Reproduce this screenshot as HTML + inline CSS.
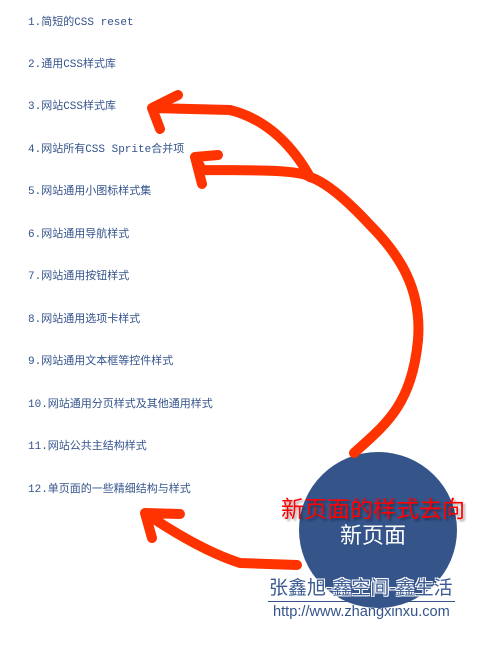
<!DOCTYPE html>
<html><head><meta charset="utf-8"><style>
body{margin:0;width:500px;height:655px;background:#fff;position:relative;overflow:hidden;font-family:"Liberation Mono","Noto Sans CJK SC",monospace}
.li{position:absolute;left:28px;font-size:11px;color:#34538b;line-height:14px;white-space:nowrap}
.circle{position:absolute;left:299px;top:452px;width:158px;height:156px;border-radius:50%;background:#34548a}
.t{position:absolute;white-space:nowrap;font-family:"Liberation Sans","Noto Sans CJK SC",sans-serif}
</style></head><body>
<div class="li" style="top:16px">1.简短的CSS reset</div>
<div class="li" style="top:58px">2.通用CSS样式库</div>
<div class="li" style="top:100px">3.网站CSS样式库</div>
<div class="li" style="top:143px">4.网站所有CSS Sprite合并项</div>
<div class="li" style="top:185px">5.网站通用小图标样式集</div>
<div class="li" style="top:228px">6.网站通用导航样式</div>
<div class="li" style="top:270px">7.网站通用按钮样式</div>
<div class="li" style="top:313px">8.网站通用选项卡样式</div>
<div class="li" style="top:355px">9.网站通用文本框等控件样式</div>
<div class="li" style="top:398px">10.网站通用分页样式及其他通用样式</div>
<div class="li" style="top:440px">11.网站公共主结构样式</div>
<div class="li" style="top:483px">12.单页面的一些精细结构与样式</div>
<div class="circle"></div>
<svg width="500" height="655" style="position:absolute;left:0;top:0" fill="none" stroke="#ff3300" stroke-width="10" stroke-linecap="round" stroke-linejoin="round">
<path d="M354 453 C385 425 412 405 418 340 C422 290 400 255 370 225 C345 198 325 182 310 177"/>
<path d="M310 177 C295 150 270 120 230 110 L152 108 M178 95 L152 108 L160 129"/>
<path d="M310 177 C300 170 260 170 202 170 L195 157 M218 155 L195 157 L202 184"/>
<path d="M297 565 L240 563 C215 555 185 540 145 513 M180 514 L145 513 L152 538"/>
</svg>
<div class="t" style="left:281px;top:490px;font-size:23px;color:#ff0000;text-shadow:2px 2px 2px rgba(0,0,0,.35)">新页面的样式去向</div>
<div class="t" style="left:340px;top:518px;font-size:22px;color:#fff">新页面</div>
<div class="t" style="left:269px;top:573px;font-size:19px;color:#3a5a92;text-shadow:1px 1px 0 #fff,-1px -1px 0 #fff,1px -1px 0 #fff,-1px 1px 0 #fff">张鑫旭-鑫空间-鑫生活</div>
<div style="position:absolute;left:268px;top:601px;width:187px;height:1px;background:#34538b"></div>
<div class="t" style="left:273px;top:604px;font-size:14.6px;color:#34538b">http://www.zhangxinxu.com</div>
</body></html>
